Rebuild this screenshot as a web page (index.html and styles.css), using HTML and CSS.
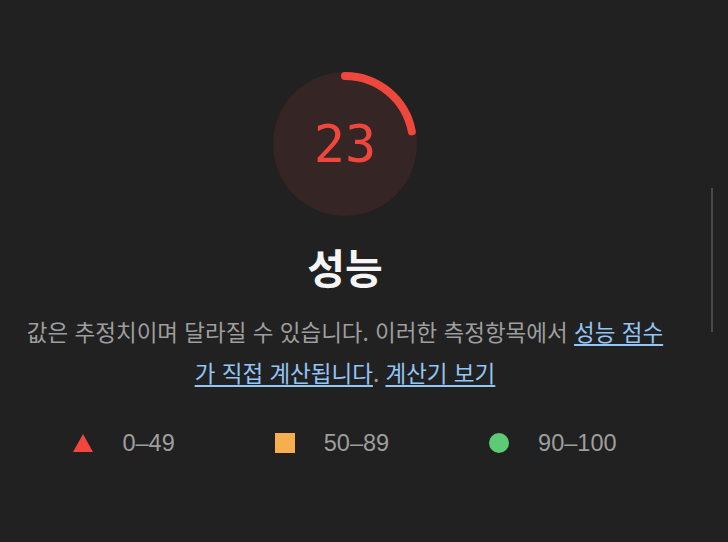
FILE: index.html
```html
<!DOCTYPE html>
<html lang="ko">
<head>
    <meta charset="UTF-8">
    <meta name="viewport" content="width=device-width, initial-scale=1.0">
    <title>성능</title>
    <link rel="stylesheet" href="styles.css">
</head>
<body>
    <div class="report">
        <div class="gauge">
            <svg class="gauge-svg" viewBox="0 0 144 144" width="144" height="144">
                <circle class="gauge-base" cx="72" cy="72" r="72"></circle>
                <circle class="gauge-arc" cx="72" cy="72" r="68" transform="rotate(-90 72 72)"></circle>
            </svg>
            <div class="gauge-score">23</div>
        </div>
        <h1 class="gauge-label">성능</h1>
        <p class="description">
            값은 추정치이며 달라질 수 있습니다. 이러한 측정항목에서 <a href="#">성능 점수<br>가 직접 계산됩니다</a>. <a href="#">계산기 보기</a>
        </p>
        <div class="legend">
            <div class="legend-item">
                <span class="icon icon-fail"></span>
                <span>0–49</span>
            </div>
            <div class="legend-item">
                <span class="icon icon-average"></span>
                <span>50–89</span>
            </div>
            <div class="legend-item">
                <span class="icon icon-pass"></span>
                <span>90–100</span>
            </div>
        </div>
    </div>
    <div class="scrollbar"></div>
</body>
</html>
```

FILE: styles.css
```css
body {
    margin: 0;
    background: #212121;
    font-family: "Noto Sans CJK KR", "Noto Sans", sans-serif;
    height: 542px;
    overflow: hidden;
}
.report {
    width: 690px;
    display: flex;
    flex-direction: column;
    align-items: center;
    padding-top: 72px;
}
.gauge {
    position: relative;
    width: 144px;
    height: 144px;
}
.gauge-svg {
    display: block;
}
.gauge-base {
    fill: #352524;
}
.gauge-arc {
    fill: none;
    stroke: #f0473d;
    stroke-width: 8;
    stroke-linecap: round;
    stroke-dasharray: 94 400;
}
.gauge-score {
    position: absolute;
    top: 0;
    left: 0;
    width: 144px;
    height: 144px;
    display: flex;
    align-items: center;
    justify-content: center;
    font-family: "DejaVu Sans Mono", monospace;
    font-size: 52px;
    color: #f0473d;
}
.gauge-label {
    margin: 25px 0 0;
    font-size: 41px;
    line-height: 50px;
    font-weight: 700;
    color: #f5f5f5;
}
.description {
    margin: 20px 0 0;
    font-size: 22.5px;
    line-height: 41px;
    color: #9e9e9e;
    text-align: center;
}
.description a {
    color: #93c5f6;
    text-decoration: underline;
    text-underline-offset: 3px;
}
.legend {
    display: flex;
    gap: 100px;
    margin-top: 35px;
    font-family: "Liberation Sans", Arial, sans-serif;
    font-size: 23.5px;
    line-height: 30px;
    color: #9e9e9e;
}
.legend-item {
    display: flex;
    align-items: center;
    gap: 29px;
}
.icon {
    display: block;
    width: 20px;
    height: 20px;
}
.icon-fail {
    width: 0;
    height: 0;
    border-left: 10px solid transparent;
    border-right: 10px solid transparent;
    border-bottom: 18px solid #f0463d;
}
.icon-average {
    background: #f5ae50;
}
.icon-pass {
    background: #5dcb73;
    border-radius: 50%;
}
.scrollbar {
    position: absolute;
    left: 711px;
    top: 188px;
    width: 2px;
    height: 144px;
    background: #4a4a4a;
}
```
